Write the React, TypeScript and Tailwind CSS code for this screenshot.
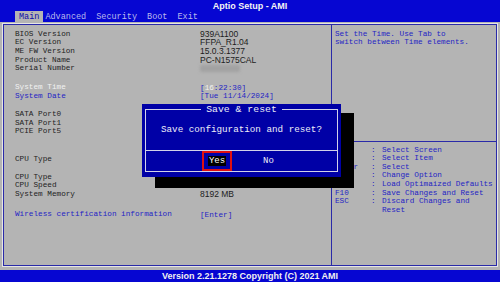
import React from "react";

const mono = "font-['Liberation_Mono','DejaVu_Sans_Mono',monospace]";
const sans = "font-['Liberation_Sans',Arial,sans-serif]";

type RowProps = {
  label: string;
  value?: React.ReactNode;
  labelCls?: string;
  valueCls?: string;
};

function Row({ label, value, labelCls = "text-[#1e1e1e]", valueCls = "text-[#1c1c1c]" }: RowProps) {
  return (
    <div className="flex h-[8.7px] items-center whitespace-pre">
      <div className={`w-[185px] shrink-0 ${labelCls}`}>{label}</div>
      <div className={`${sans} text-[8.5px] ${valueCls}`}>{value}</div>
    </div>
  );
}

const legend: [string, string][] = [
  ["→←", "Select Screen"],
  ["↑↓", "Select Item"],
  ["Enter", "Select"],
  ["+/-", "Change Option"],
  ["F9", "Load Optimaized Defaults"],
  ["F10", "Save Changes and Reset"],
  ["ESC", "Discard Changes and"],
  ["", "Reset"],
];

export default function App() {
  return (
    <div className={`relative w-[500px] h-[282px] overflow-hidden bg-[#b4b4b4] ${mono} text-[7.7px] leading-[8.7px]`}>
      {/* Header */}
      <div className="h-[22px] bg-[#0606d2] flex flex-col">
        <div className={`h-[12px] flex items-center justify-center ${sans} font-bold text-[9px] text-[#f4f4f4]`}>
          Aptio Setup - AMI
        </div>
        <div className="h-[10px] flex items-end pl-[15px] text-[8.5px] leading-[10px]">
          <div className="h-[11px] -mt-[1px] px-[4px] bg-[#b4b4b4] text-[#0c0ca8] flex items-center">Main</div>
          <div className="ml-[2px] text-[#b9b9ec] h-[10px] flex items-center">Advanced</div>
          <div className="ml-[10px] text-[#b9b9ec] h-[10px] flex items-center">Security</div>
          <div className="ml-[10px] text-[#b9b9ec] h-[10px] flex items-center">Boot</div>
          <div className="ml-[10px] text-[#b9b9ec] h-[10px] flex items-center">Exit</div>
        </div>
      </div>

      {/* Body */}
      <div className="h-[248px] pt-[2px] px-[3px]">
        <div className="h-[242px] flex border border-[#2a2aa8] shadow-[0_0_0_1px_#e6e6e6]">
          {/* Left panel */}
          <div className="w-[327px] shrink-0 pl-[11px] pt-[4.7px]">
            <Row label="BIOS Version" value="939A1100" />
            <Row label="EC Version" value="FFPA_R1.04" />
            <Row label="ME FW Version" value="15.0.3.1377" />
            <Row label="Product Name" value="PC-N1575CAL" />
            <Row
              label="Serial Number"
              value={<div className="w-[40px] h-[7px] bg-[#a2a2a2] blur-[1.5px] rounded-[2px]" />}
            />
            <div className="mt-[10px]">
              <Row
                label="System Time"
                labelCls="text-[#f2f2f2]"
                value={
                  <span className={`${mono} text-[7.7px] text-[#2424c4]`}>
                    [<span className="text-[#f2f2f2]">16</span>:22:30]
                  </span>
                }
              />
              <Row
                label="System Date"
                labelCls="text-[#2424c4]"
                value={<span className={`${mono} text-[7.7px] text-[#2424c4]`}>[Tue 11/14/2024]</span>}
              />
            </div>
            <div className="mt-[9.5px]">
              <Row label="SATA Port0" />
              <Row label="SATA Port1" />
              <Row label="PCIE Port5" />
            </div>
            <div className="mt-[18.7px]">
              <Row label="CPU Type" />
            </div>
            <div className="mt-[9.3px]">
              <Row label="CPU Type" />
              <Row label="CPU Speed" />
              <Row label="System Memory" value="8192 MB" />
            </div>
            <div className="mt-[11.5px]">
              <Row
                label="Wireless certification information"
                labelCls="text-[#2424c4]"
                value={<span className={`${mono} text-[7.7px] text-[#2424c4]`}>[Enter]</span>}
              />
            </div>
          </div>

          {/* Right panel */}
          <div className="flex-1 flex flex-col border-l border-[#2a2aa8] text-[#2424c4]">
            <div className="h-[116px] pl-[3px] pt-[4.7px] whitespace-pre">
              <div>Set the Time. Use Tab to</div>
              <div>switch between Time elements.</div>
            </div>
            <div className="border-t border-[#2a2aa8] pl-[3px] pt-[3.7px]">
              {legend.map(([k, d], i) => (
                <div key={i} className="flex h-[8.6px] items-center whitespace-pre">
                  <div className="w-[36px]">{k}</div>
                  <div className="w-[11px]">{k ? ":" : ""}</div>
                  <div>{d}</div>
                </div>
              ))}
            </div>
          </div>
        </div>
      </div>

      {/* Footer */}
      <div className={`h-[12px] bg-[#0606d2] flex items-center justify-center ${sans} font-bold text-[9px] text-[#f0f0f0]`}>
        Version 2.21.1278 Copyright (C) 2021 AMI
      </div>

      {/* Dialog shadow */}
      <div className="absolute left-[155px] top-[113px] w-[199px] h-[75px] bg-black" />

      {/* Dialog */}
      <div className="absolute left-[142px] top-[104px] w-[199px] h-[73px] bg-[#0000a6] px-[3px] pt-[5px] pb-[5px] text-[#eeeef8]">
        <div className="relative h-full border border-[#d2d2ea] flex flex-col">
          <div className="absolute left-0 right-0 -top-[6px] flex justify-center">
            <span className="bg-[#0000a6] px-[5px] text-[9.8px] leading-[11px]">Save &amp; reset</span>
          </div>
          <div className="h-[41px] flex items-center justify-center text-[9.25px]">
            Save configuration and reset?
          </div>
          <div className="flex-1 border-t border-[#d2d2ea] flex items-center text-[9px]">
            <div className="ml-[56px] w-[30px] h-[20px] border-2 border-[#e01010] flex items-center justify-center">
              <span className="bg-black text-white px-[1px] leading-[10px]">Yes</span>
            </div>
            <div className="ml-[31px]">No</div>
          </div>
        </div>
      </div>
    </div>
  );
}
